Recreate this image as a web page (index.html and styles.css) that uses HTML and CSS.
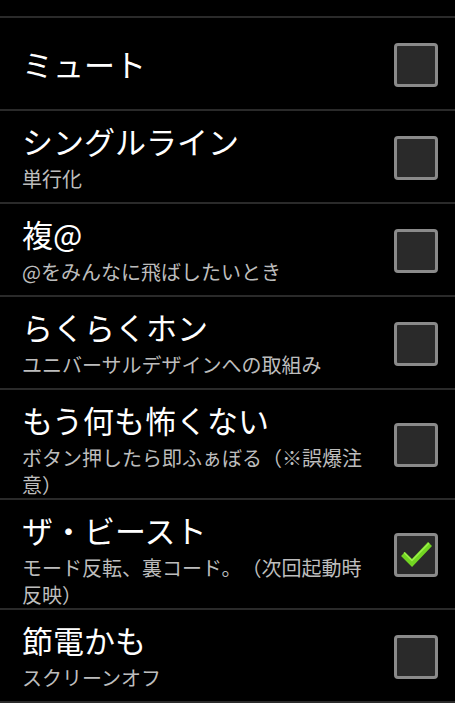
FILE: index.html
```html
<!DOCTYPE html>
<html>
<head>
  <meta charset='UTF-8'>
  <title>設定</title>
  <link rel="stylesheet" href="styles.css">
</head>
<body>

  <div class='lista'>
    <div class='item topo'></div>

    <div class='item simples'>
      <div class='texto'>
        <div class='titulo'>ミュート</div>
      </div>
      <span class='caixa'></span>
    </div>

    <div class='item'>
      <div class='texto'>
        <div class='titulo'>シングルライン</div>
        <div class='resumo'>単行化</div>
      </div>
      <span class='caixa'></span>
    </div>

    <div class='item'>
      <div class='texto'>
        <div class='titulo'>複@</div>
        <div class='resumo'>@をみんなに飛ばしたいとき</div>
      </div>
      <span class='caixa'></span>
    </div>

    <div class='item'>
      <div class='texto'>
        <div class='titulo'>らくらくホン</div>
        <div class='resumo'>ユニバーサルデザインへの取組み</div>
      </div>
      <span class='caixa'></span>
    </div>

    <div class='item'>
      <div class='texto'>
        <div class='titulo'>もう何も怖くない</div>
        <div class='resumo'>ボタン押したら即ふぁぼる（※誤爆注意）</div>
      </div>
      <span class='caixa'></span>
    </div>

    <div class='item'>
      <div class='texto'>
        <div class='titulo'>ザ・ビースト</div>
        <div class='resumo'>モード反転、裏コード。（次回起動時反映）</div>
      </div>
      <span class='caixa marcada'>
        <svg width='43' height='43' viewBox='0 0 43 43'>
          <polyline points='9,21 18,30 36,11' fill='none' stroke='#72d522' stroke-width='5.5'/>
          <polyline points='10,19.5 18,27.5 35,10' fill='none' stroke='#9cf04a' stroke-width='1.5'/>
        </svg>
      </span>
    </div>

    <div class='item'>
      <div class='texto'>
        <div class='titulo'>節電かも</div>
        <div class='resumo'>スクリーンオフ</div>
      </div>
      <span class='caixa'></span>
    </div>
  </div>

</body>
</html>
```

FILE: styles.css
```css
body { margin: 0; background: #000; color: #fff; font-family: "Noto Sans CJK JP", "Noto Sans", sans-serif; }
.lista { display: flex; flex-direction: column; }
.item { display: flex; align-items: center; box-sizing: border-box; min-height: 93px; padding: 5px 17px 5px 22px; border-bottom: 2px solid #2a2a2a; }
.item.topo { min-height: 0; height: 18px; padding: 0; }
.texto { flex: 1; min-width: 0; align-self: flex-start; padding: 5px 18px 0 0; margin-bottom: -5px; }
.simples .texto { align-self: center; padding-top: 0; margin-bottom: 0; }
.titulo { font-size: 31px; line-height: 40px; }
.resumo { font-size: 20px; line-height: 27px; margin-top: 4px; color: #bdbdbd; text-spacing-trim: space-all; }
.caixa { flex: none; display: block; box-sizing: border-box; width: 44px; height: 44px; margin-top: 2px; border: 3px solid #8a8a8a; border-radius: 4px; background: #2a2a2a; position: relative; }
.caixa svg { position: absolute; left: -3px; top: -3px; }
```
